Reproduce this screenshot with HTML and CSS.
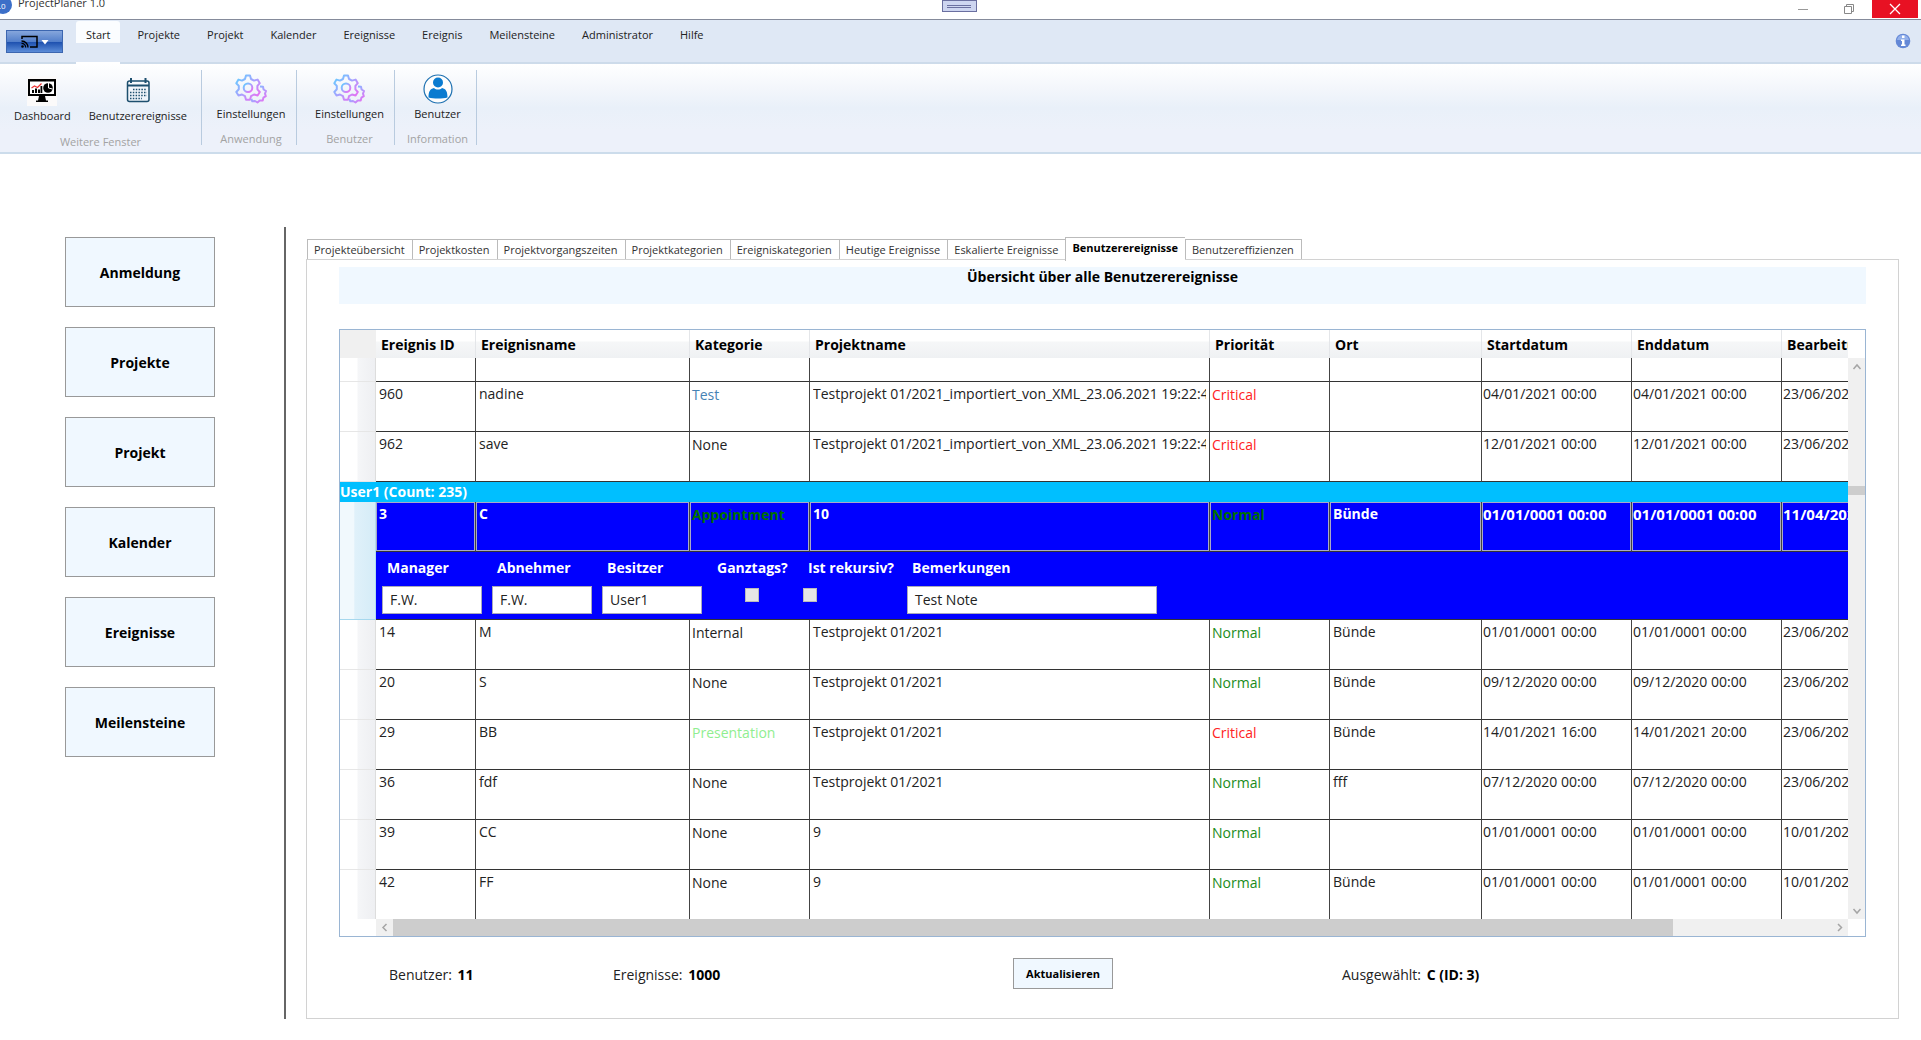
FILE: index.html
```html
<!DOCTYPE html>
<html lang="de">
<head>
<meta charset="utf-8">
<title>ProjectPlaner 1.0</title>
<link rel="stylesheet" href="styles.css">
</head>
<body>
<svg width="0" height="0" class="defs" aria-hidden="true">
  <defs>
    <linearGradient id="gearfill" x1="0" y1="0" x2="1" y2="1">
      <stop offset="0" stop-color="#5fd0ff"/><stop offset="0.5" stop-color="#a9a0ff"/><stop offset="1" stop-color="#f566f0"/>
    </linearGradient>
    <symbol id="gears" viewBox="0 0 32 30">
      <g fill="none" stroke="url(#gearfill)" stroke-width="2" stroke-linejoin="round">
        <path d="M11 1.5h4l1 3.5 3 1.6 3.600-1 2.200 3.600-2.400 2.700v3.400l2.400 2.700-2.200 3.500-3.600-1-3 1.700-1 3.500h-4l-1-3.500-3-1.700-3.500 1-2.200-3.500 2.500-2.700v-3.400l-2.500-2.700 2.200-3.600 3.500 1 3-1.600z"/>
        <circle cx="13" cy="13.800" r="4.300"/>
        <path d="M25 12.500l3 .3.600 2.700 2.400 1.500-1 2.600.800 2.600-2.400 1.500-.700 2.700-3 .2-2.200 1.900-2.500-1.500-2.700.3-.900-2.500"/>
      </g>
    </symbol>
  </defs>
</svg>

<header class="titlebar">
  <svg class="logo" width="12" height="14" viewBox="0 0 12 14"><circle cx="3" cy="5" r="9" fill="#3c6fc8"/><text x="-1" y="9" font-size="8" fill="#fff" font-family="Open Sans, sans-serif">.0</text></svg>
  <span class="caption">ProjectPlaner 1.0</span>
  <button class="handle" aria-label="Leiste"></button>
  <div class="winbuttons">
    <button class="winbtn" aria-label="Minimieren"><svg width="12" height="12"><path d="M1 6.500h10" stroke="#999"/></svg></button>
    <button class="winbtn" aria-label="Wiederherstellen"><svg width="12" height="12" fill="none" stroke="#888"><path d="M1.500 3.500h7v7h-7zM3.500 3.500v-2h7v7h-2"/></svg></button>
    <button class="winbtn close" aria-label="Schließen"><svg width="12" height="12"><path d="M1 1l10 10M11 1L1 11" stroke="#fff" stroke-width="1.300"/></svg></button>
  </div>
</header>

<nav class="menubar">
  <button class="appbtn" aria-label="Anwendungsmenü">
    <svg width="28" height="14" viewBox="0 0 28 14"><path d="M1 4V1.500h15v10.500H9" fill="none" stroke="#000" stroke-width="1.500"/><path d="M.5 6c4 0 6.500 3 6.500 6.500M.5 8.300c2.500 0 4.200 2 4.200 4.200" fill="none" stroke="#000" stroke-width="1.300"/><circle cx="1.500" cy="11.500" r="1.300"/><path d="M20.500 5h7L24 9.500z" fill="#fff"/></svg>
  </button>
  <a class="menu active" href="#">Start</a>
  <a class="menu" href="#">Projekte</a>
  <a class="menu" href="#">Projekt</a>
  <a class="menu" href="#">Kalender</a>
  <a class="menu" href="#">Ereignisse</a>
  <a class="menu" href="#">Ereignis</a>
  <a class="menu" href="#">Meilensteine</a>
  <a class="menu" href="#">Administrator</a>
  <a class="menu" href="#">Hilfe</a>
  <button class="info" aria-label="Info"><svg width="16" height="16"><circle cx="8" cy="8" r="7.300" fill="#6488d6"/><path d="M2 7a6.100 6.100 0 0 1 12 0z" fill="#93b0ea"/><path d="M7 2.500h2.500V5H7zM6 6.500h3.500v5h1V13H6v-1.500h1V8H6z" fill="#fff"/></svg></button>
</nav>

<section class="ribbon">
  <div class="group wide">
    <div class="tools">
      <button class="tool"><svg width="30" height="30" viewBox="0 0 30 30"><rect width="30" height="30" fill="#fbfafa"/><path d="M1 3h28v17H1z"/><path d="M3 5.500h24v12.500H3z" fill="#fff"/><path d="M12 20h6l1 4.500h2V26H9v-1.500h2z"/><path d="M5 14h2v3H5zM8 12.500h2V17H8zM11 13.500h2V17h-2zM13.500 10h1.800v7h-1.800z"/><path d="M4.500 12l3-2 3 1.500 4-4" stroke="#e33" fill="none" stroke-width="1.200"/><circle cx="21" cy="12" r="4.800"/><path d="M21.500 12V7M21.500 12l4 1" stroke="#fff" stroke-width="1"/></svg>Dashboard</button>
      <button class="tool"><svg width="30" height="30" viewBox="0 0 30 30" fill="none" stroke="#1d4f6e" stroke-width="1.500"><rect x="4.500" y="5" width="21.500" height="20.500" rx="2"/><path d="M4.500 9.500H26" stroke-width="2"/><path d="M8 2v5M22.500 2v5" stroke-width="2"/><path d="M10 13.500h14M7 16.500h17M7 19.500h17M7 22.500h12" stroke-dasharray="1.500 1.300" stroke-width="1.700"/></svg>Benutzerereignisse</button>
    </div>
    <div class="grouplabel">Weitere Fenster</div>
  </div>
  <div class="group app">
    <div class="tools"><button class="tool"><svg width="32" height="30"><use href="#gears"/></svg>Einstellungen</button></div>
    <div class="grouplabel">Anwendung</div>
  </div>
  <div class="group user">
    <div class="tools"><button class="tool"><svg width="32" height="30"><use href="#gears"/></svg>Einstellungen</button></div>
    <div class="grouplabel">Benutzer</div>
  </div>
  <div class="group small">
    <div class="tools"><button class="tool"><svg width="30" height="30" viewBox="0 0 30 30"><circle cx="15" cy="15" r="14" fill="#fdfdfd" stroke="#1b6fb0" stroke-width="1.200"/><circle cx="15" cy="8.500" r="5" fill="#0a7bd0"/><path d="M5.500 23.500c0-6 1.500-8.500 5.500-9.500 2 2 6 2 8 0 4 1 5.500 3.500 5.500 9.500-5 1.300-14 1.300-19 0z" fill="#0a7bd0"/></svg>Benutzer</button></div>
    <div class="grouplabel">Information</div>
  </div>
</section>

<main class="workspace">
  <aside class="sidebar">
    <button class="navbtn">Anmeldung</button>
    <button class="navbtn">Projekte</button>
    <button class="navbtn">Projekt</button>
    <button class="navbtn">Kalender</button>
    <button class="navbtn">Ereignisse</button>
    <button class="navbtn">Meilensteine</button>
  </aside>

  <section class="content">
    <div class="tabs" role="tablist">
      <button class="tab" role="tab">Projekteübersicht</button>
      <button class="tab" role="tab">Projektkosten</button>
      <button class="tab" role="tab">Projektvorgangszeiten</button>
      <button class="tab" role="tab">Projektkategorien</button>
      <button class="tab" role="tab">Ereigniskategorien</button>
      <button class="tab" role="tab">Heutige Ereignisse</button>
      <button class="tab" role="tab">Eskalierte Ereignisse</button>
      <button class="tab selected" role="tab" aria-selected="true">Benutzerereignisse</button>
      <button class="tab" role="tab">Benutzereffizienzen</button>
    </div>
    <div class="panel">
      <h1 class="banner">Übersicht über alle Benutzerereignisse</h1>

      <div class="datagrid">
        <div class="view">
          <table class="events">
            <colgroup><col class="c-head"><col class="c-id"><col class="c-name"><col class="c-kind"><col class="c-project"><col class="c-prio"><col class="c-place"><col class="c-date"><col class="c-date"><col class="c-date"></colgroup>
            <thead>
              <tr><th class="corner"></th><th>Ereignis ID</th><th>Ereignisname</th><th>Kategorie</th><th>Projektname</th><th>Priorität</th><th>Ort</th><th>Startdatum</th><th>Enddatum</th><th>Bearbeitungsdatum</th></tr>
            </thead>
            <tbody>
              <tr class="partial"><td class="rowhead"></td><td></td><td></td><td></td><td></td><td></td><td></td><td></td><td></td><td></td></tr>
              <tr><td class="rowhead"></td><td>960</td><td>nadine</td><td class="kind test">Test</td><td><div class="clip">Testprojekt 01/2021_importiert_von_XML_23.06.2021 19:22:45</div></td><td class="kind critical">Critical</td><td></td><td class="date">04/01/2021 00:00</td><td class="date">04/01/2021 00:00</td><td class="date">23/06/2021 19:22</td></tr>
              <tr><td class="rowhead"></td><td>962</td><td>save</td><td class="kind">None</td><td><div class="clip">Testprojekt 01/2021_importiert_von_XML_23.06.2021 19:22:45</div></td><td class="kind critical">Critical</td><td></td><td class="date">12/01/2021 00:00</td><td class="date">12/01/2021 00:00</td><td class="date">23/06/2021 19:22</td></tr>
              <tr class="grouprow"><td colspan="10">User1 (Count: 235)</td></tr>
              <tr class="current"><td class="rowhead"></td><td>3</td><td>C</td><td class="kind appointment">Appointment</td><td>10</td><td class="kind appointment">Normal</td><td>Bünde</td><td class="date">01/01/0001 00:00</td><td class="date">01/01/0001 00:00</td><td class="date">11/04/2021 00:00</td></tr>
              <tr class="details"><td class="rowhead"></td><td colspan="9">
                <div class="fields">
                  <label class="field">Manager<input type="text" value="F.W."></label>
                  <label class="field">Abnehmer<input type="text" value="F.W."></label>
                  <label class="field">Besitzer<input type="text" value="User1"></label>
                  <label class="check allday">Ganztags?<input type="checkbox" disabled></label>
                  <label class="check recur">Ist rekursiv?<input type="checkbox" disabled></label>
                  <label class="field note">Bemerkungen<input type="text" value="Test Note"></label>
                </div>
              </td></tr>
              <tr><td class="rowhead"></td><td>14</td><td>M</td><td class="kind">Internal</td><td>Testprojekt 01/2021</td><td class="kind normal">Normal</td><td>Bünde</td><td class="date">01/01/0001 00:00</td><td class="date">01/01/0001 00:00</td><td class="date">23/06/2021 19:22</td></tr>
              <tr><td class="rowhead"></td><td>20</td><td>S</td><td class="kind">None</td><td>Testprojekt 01/2021</td><td class="kind normal">Normal</td><td>Bünde</td><td class="date">09/12/2020 00:00</td><td class="date">09/12/2020 00:00</td><td class="date">23/06/2021 19:22</td></tr>
              <tr><td class="rowhead"></td><td>29</td><td>BB</td><td class="kind presentation">Presentation</td><td>Testprojekt 01/2021</td><td class="kind critical">Critical</td><td>Bünde</td><td class="date">14/01/2021 16:00</td><td class="date">14/01/2021 20:00</td><td class="date">23/06/2021 19:22</td></tr>
              <tr><td class="rowhead"></td><td>36</td><td>fdf</td><td class="kind">None</td><td>Testprojekt 01/2021</td><td class="kind normal">Normal</td><td>fff</td><td class="date">07/12/2020 00:00</td><td class="date">07/12/2020 00:00</td><td class="date">23/06/2021 19:22</td></tr>
              <tr><td class="rowhead"></td><td>39</td><td>CC</td><td class="kind">None</td><td>9</td><td class="kind normal">Normal</td><td></td><td class="date">01/01/0001 00:00</td><td class="date">01/01/0001 00:00</td><td class="date">10/01/2021 00:00</td></tr>
              <tr class="last"><td class="rowhead"></td><td>42</td><td>FF</td><td class="kind">None</td><td>9</td><td class="kind normal">Normal</td><td>Bünde</td><td class="date">01/01/0001 00:00</td><td class="date">01/01/0001 00:00</td><td class="date">10/01/2021 00:00</td></tr>
            </tbody>
          </table>
        </div>
        <div class="vbar">
          <svg width="17" height="17" fill="none" stroke="#a5a5a5" stroke-width="1.500"><path d="M5.500 11l3.500-4 3.500 4"/></svg>
          <div class="vtrack"><div class="vthumb"></div></div>
          <svg width="17" height="17" fill="none" stroke="#a5a5a5" stroke-width="1.500"><path d="M5.500 7l3.500 4 3.500-4"/></svg>
        </div>
        <div class="hbar">
          <svg width="17" height="17" fill="none" stroke="#a5a5a5" stroke-width="1.500"><path d="M10.500 5L7 8.500l3.500 3.500"/></svg>
          <div class="htrack"><div class="hthumb"></div></div>
          <svg width="17" height="17" fill="none" stroke="#a5a5a5" stroke-width="1.500"><path d="M7 5l3.500 3.500L7 12"/></svg>
        </div>
      </div>

      <footer class="summary">
        <span>Benutzer: <b>11</b></span>
        <span>Ereignisse: <b>1000</b></span>
        <button class="refresh">Aktualisieren</button>
        <span>Ausgewählt: <b>C (ID: 3)</b></span>
      </footer>
    </div>
  </section>
</main>
</body>
</html>
```
FILE: styles.css
```css
* { box-sizing: border-box; }

body {
  margin: 0;
  background: #fff;
  color: #222;
  font: 14px/20px "Open Sans", "Noto Sans", sans-serif;
}

button, input { font: inherit; color: inherit; margin: 0; }
button { padding: 0; border: 0; background: none; }
svg { display: block; flex: none; }
.defs { position: absolute; }

/* Title bar */
.titlebar {
  position: relative;
  display: flex;
  align-items: flex-start;
  gap: 6px;
  height: 20px;
  overflow: hidden;
  border-bottom: 1px solid #858b9b;
}
.caption { font-size: 11px; line-height: 6px; color: #333; }
.handle {
  position: absolute;
  top: 0;
  left: 50%;
  width: 35px;
  height: 12px;
  margin-left: -19px;
  border: 1px solid #6a6fa0;
  background: linear-gradient(#6a6fa0, #6a6fa0) center 4px / 24px 1px no-repeat, linear-gradient(#6a6fa0, #6a6fa0) center 6px / 24px 1px no-repeat, #cdd5f0;
}
.winbuttons { display: flex; margin-left: auto; padding-right: 3px; }
.winbtn { display: flex; align-items: center; justify-content: center; width: 46px; height: 18px; }
.close { background: #e81123; }

/* Menu row */
.menubar {
  display: flex;
  align-items: flex-start;
  height: 44px;
  padding: 1px 10px 0 6px;
  background: #dfe8f5;
  border-bottom: 2px solid #cddbea;
  font-size: 11px;
}
.appbtn {
  display: flex;
  align-items: center;
  justify-content: center;
  width: 57px;
  height: 23px;
  margin: 9px 13px 0 0;
  border: 1px solid #3c66b0;
  background: linear-gradient(#86a6dc, #5480cb 50%, #1c4fae 52%, #5b8cd8);
}
.menu {
  height: 22px;
  margin-right: 7px;
  padding: 0 10px;
  line-height: 28px;
  color: #222;
  text-decoration: none;
}
.menu.active { position: relative; background: #fbfdff; border-radius: 3px 3px 0 0; }
/* Notch that joins the active menu to the ribbon below */
.menu.active::after {
  content: "";
  position: absolute;
  top: 41px;
  left: 0;
  right: 0;
  height: 2px;
  background: #fff;
}
.info { margin: 12px 0 0 auto; }

/* Ribbon */
.ribbon {
  display: flex;
  align-items: flex-start;
  height: 90px;
  padding-top: 6px;
  background: linear-gradient(#fff, #f3f6fb 28%, #e9f0f9 50%, #edf1fa 75%);
  border-bottom: 2px solid #ccdceb;
  font-size: 11px;
}
.group {
  display: flex;
  flex-direction: column;
  align-items: center;
  height: 75px;
  border-right: 1px solid #b9cbdf;
}
.wide { width: 202px; padding-top: 2px; }
.app { width: 95px; padding-left: 4px; }
.user { width: 98px; padding-left: 8px; }
.small { width: 82px; padding-left: 4px; }
.tools { display: flex; gap: 18px; }
.tool { display: flex; flex-direction: column; align-items: center; padding-top: 4px; }
.grouplabel { margin-top: 5px; color: #a3a3a3; }
.wide .grouplabel { margin-top: 6px; }

/* Work area */
.workspace { display: flex; padding: 73px 22px 0 65px; }
.sidebar {
  display: flex;
  flex-direction: column;
  gap: 20px;
  width: 221px;
  padding: 10px 0 0;
  border-right: 2px solid #666;
}
.navbtn {
  width: 150px;
  height: 70px;
  padding-top: 2px;
  border: 1px solid #999;
  background: #f0f8ff;
  color: #000;
  font-weight: 700;
}
.content { flex: 1; min-width: 0; padding: 10px 0 0 20px; }

.tabs { display: flex; align-items: flex-end; height: 22px; padding-left: 1px; font-size: 11px; }
.tab {
  height: 20px;
  padding: 0 7px 2px 6px;
  border: 1px solid #bbb;
  border-right-width: 0;
  border-bottom: 0;
  color: #333;
  white-space: nowrap;
}
.tab:last-child { border-right-width: 1px; }
.tab.selected {
  position: relative;
  height: 24px;
  margin-bottom: -2px;
  padding-bottom: 4px;
  background: #fff;
  color: #000;
  font-weight: 700;
}
.panel { padding: 7px 32px 29px; border: 1px solid #d2d2d2; }
.banner {
  height: 37px;
  margin: 0 0 25px;
  background: #f0f8ff;
  color: #000;
  font-size: 14px;
  font-weight: 700;
  line-height: 20px;
  text-align: center;
}

/* Data grid */
.datagrid {
  display: grid;
  grid-template-columns: minmax(0, 1fr) 17px;
  border: 1px solid #9ab5d3;
}
.view { overflow: hidden; }
.events { width: 1592px; table-layout: fixed; border-collapse: separate; border-spacing: 0; }
.c-head { width: 36px; }
.c-id { width: 100px; }
.c-name { width: 214px; }
.c-kind { width: 120px; }
.c-project { width: 400px; }
.c-prio { width: 120px; }
.c-place { width: 152px; }
.c-date { width: 150px; }

.events th {
  height: 28px;
  padding: 2px 5px 0;
  border-right: 1px solid #e4e6e9;
  background: linear-gradient(#fff 40%, #f6f7f8 42%, #eff1f3);
  color: #000;
  font-weight: 700;
  text-align: left;
  white-space: nowrap;
}
.events .corner { border: 0; background: #f0f0f0; }
.events td {
  height: 50px;
  padding: 2px 3px 0;
  border-right: 1px solid #444;
  border-bottom: 1px solid #333;
  overflow: hidden;
  vertical-align: top;
  white-space: nowrap;
}
.events .kind { padding-top: 3px; padding-left: 2px; }
.events .date { padding-left: 1px; }
.clip { overflow: hidden; }
.events .rowhead {
  border-right: 1px solid #ddd;
  border-bottom-color: #e6e6e6;
  background: linear-gradient(90deg, #fff 49%, #f5f6f8 51%, #eeeff2);
}
.events .partial td { height: 24px; }
.events .last td { height: 49px; border-bottom: 0; }
.test { color: #4682b4; }
.critical { color: #f22; }
.normal { color: #1a8c1a; }
.presentation { color: #90ee90; }

.events .grouprow td {
  height: 20px;
  padding: 0;
  border: 0;
  background: #00bfff;
  color: #fff;
  font-weight: 700;
}
.events .current td {
  background: #00f;
  box-shadow: inset 0 0 0 1px #a9a9c8;
  color: #fff;
  font-weight: 700;
}
.events .current .date { font-size: 15px; }
.events .current .appointment { color: #007000; }
.events .current .rowhead, .events .details .rowhead {
  border-right-color: #b5dcee;
  border-bottom-color: #a6d8ee;
  background: linear-gradient(90deg, #f1f9fd 40%, #e0f1fa 42%, #d5ecf7);
  box-shadow: none;
}
.events .current .rowhead { border-bottom: 0; }
.events .details td { height: 68px; padding: 6px 6px 0; background: #00f; }

.fields { display: flex; color: #fff; font-weight: 700; }
.field, .check { display: flex; flex-direction: column; gap: 8px; }
.field { width: 110px; text-indent: 5px; }
.field input {
  width: 100px;
  height: 28px;
  padding: 0 2px 2px;
  border: 1px solid #aab;
  background: #fff;
  color: #222;
  font-weight: 400;
  text-indent: 5px;
}
.field.note input { width: 250px; }
.allday { width: 91px; padding-left: 5px; }
.recur { width: 104px; text-indent: 5px; }
.check { gap: 10px; }
.check input {
  appearance: none;
  width: 14px;
  height: 14px;
  border: 1px solid #bbb;
  background: #e6e6e6;
}
.allday input { margin-left: 28px; }

.vbar { display: flex; flex-direction: column; margin-top: 28px; background: #f0f0f0; }
.vtrack { display: flex; flex-direction: column; flex: 1; padding-top: 111px; }
.vthumb { height: 9px; background: #cdcdcd; }
.hbar { display: flex; height: 17px; margin-left: 36px; background: #f0f0f0; }
.htrack { flex: 1; }
.hthumb { width: 89%; height: 17px; background: #cdcdcd; }

.summary {
  display: grid;
  grid-template-columns: 224fr 400fr 329fr 524fr;
  align-items: center;
  padding: 21px 0 0 50px;
}
.summary span { padding-top: 2px; }
.summary b { margin-left: 2px; color: #000; }
.refresh {
  width: 100px;
  height: 31px;
  border: 1px solid #999;
  background: #f0f8ff;
  color: #000;
  font-size: 11px;
  font-weight: 700;
}
```
